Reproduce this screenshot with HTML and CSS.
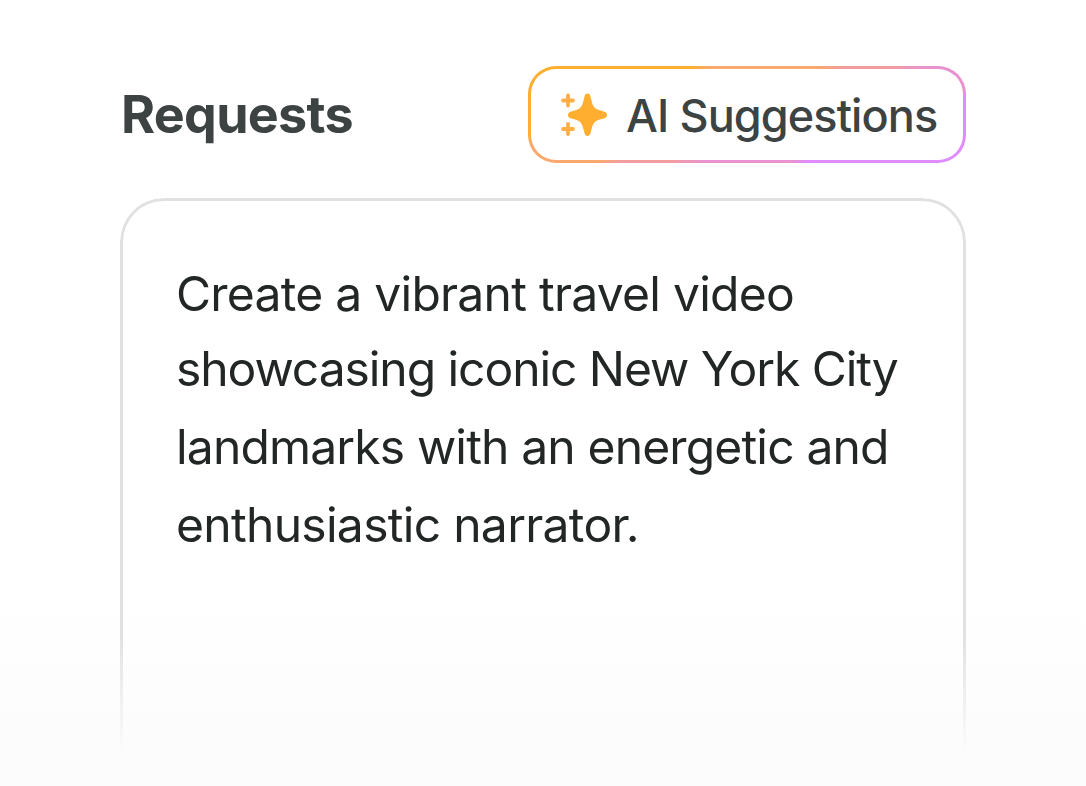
FILE: index.html
```
<!DOCTYPE html>
<html lang="en">
<head>
  <meta charset="UTF-8">
  <meta name="viewport" content="width=device-width, initial-scale=1.0">
  <title>Requests</title>
  <link rel="stylesheet" href="styles.css">
</head>
<body>
  <main class="requests">
    <header class="requests-header">
      <h1>Requests</h1>
      <button class="ai-button" type="button">
        <svg class="sparkle" viewBox="0 0 48 48" aria-hidden="true">
          <path class="star" d="M27.500 2.500C29.200 2.500 30 3.500 30.500 5.500L32 11.500C33.300 16 35 17.700 39 19L44.500 20.700C46.200 21.300 47 22.300 47 24C47 25.700 46.200 26.700 44.500 27.200L39 28.800C35 30.200 33.300 32 32 36.500L30.500 42C30 44 29.200 45 27.500 45C25.800 45 25 44 24.500 42L23 36.500C21.700 32 20 30.200 16 28.800L10.500 27.200C8.800 26.700 8 25.700 8 24C8 22.300 8.800 21.300 10.500 20.700L16 19C20 17.700 21.700 16 23 11.500L24.500 5.500C25 3.500 25.800 2.500 27.500 2.500Z"/>
          <path class="plus" d="M8 4.500V14.500M3 9.500H13M8 33V43M3 38H13"/>
        </svg>
        <span>AI Suggestions</span>
      </button>
    </header>
    <section class="prompt-box">
      <p>
        <span class="line line-1">Create a vibrant travel video</span>
        <span class="line line-2">showcasing iconic New York City</span>
        <span class="line line-3">landmarks with an energetic and</span>
        <span class="line line-4">enthusiastic narrator.</span>
      </p>
    </section>
  </main>
</body>
</html>
```

FILE: styles.css
```
* { box-sizing: border-box; }
body {
  margin: 0;
  height: 786px;
  overflow: hidden;
  background: linear-gradient(#fff 590px, #fcfcfc 750px);
  color: #3c4342;
  font-family: Inter, sans-serif;
}
.requests { width: 846px; margin-left: 120px; padding-top: 66px; }
.requests-header { display: flex; justify-content: space-between; align-items: center; height: 97px; }
h1 { margin: 0; padding-left: 1px; font-size: 52px; font-weight: 700; letter-spacing: -0.7px; }
.ai-button {
  display: flex;
  align-items: center;
  gap: 18px;
  width: 438px;
  height: 97px;
  padding: 0 0 0 29px;
  border: 3px solid transparent;
  border-radius: 28px;
  background:
    linear-gradient(#fff, #fff) padding-box,
    linear-gradient(157deg, #ffae30 25%, #faa86e 28%, #faa86e 44%, #f29c9f 48%, #f29c9f 55%, #e893cf 60%, #e893cf 73%, #e08cff 76%) border-box;
  color: #3c4342;
  font: 500 45px Inter, sans-serif;
  letter-spacing: -0.9px;
  white-space: nowrap;
}
.ai-button span { padding-top: 1px; }
.sparkle { flex: none; width: 48px; height: 48px; }
.star { fill: #ffae30; }
.plus { fill: none; stroke: #ffae45; stroke-width: 3.8; stroke-linecap: round; }
.prompt-box {
  height: 560px;
  margin-top: 35px;
  padding: 54px 53px;
  border: 3px solid #e0e1e1;
  border-bottom: 0;
  border-radius: 44px 44px 0 0;
  -webkit-mask-image: linear-gradient(#000 440px, transparent 555px);
  mask-image: linear-gradient(#000 440px, transparent 555px);
}
.prompt-box p { margin: 0; color: #222726; font-size: 48px; line-height: 77px; }
.line { display: block; white-space: nowrap; }
.line-1 { letter-spacing: -0.74px; }
.line-2 { margin-top: -2px; letter-spacing: -1.06px; }
.line-3 { margin-top: 1px; letter-spacing: -0.84px; }
.line-4 { margin-top: 1px; letter-spacing: -0.7px; }
```
